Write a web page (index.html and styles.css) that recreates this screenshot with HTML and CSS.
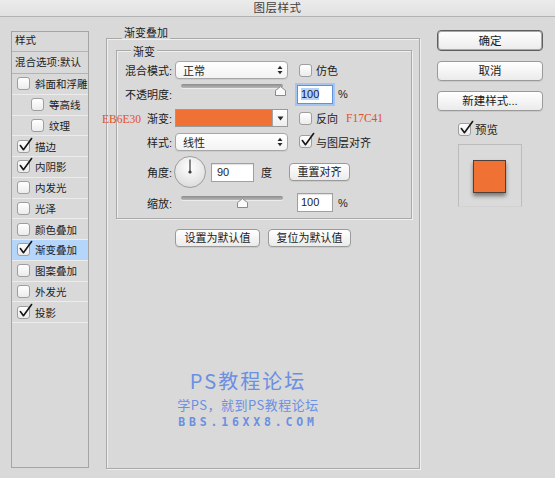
FILE: index.html
```html
<!DOCTYPE html>
<html lang="zh-CN">
<head>
<meta charset="utf-8">
<title>图层样式</title>
<link rel="stylesheet" href="styles.css">
</head>
<body>
<div class="titlebar">图层样式</div>
<div class="main">
  <nav class="sidebar">
    <div class="side-head">样式</div>
    <div class="side-blend">混合选项:默认</div>
    <div class="side-item"><span class="cb"></span>斜面和浮雕</div>
    <div class="side-item sub"><span class="cb"></span>等高线</div>
    <div class="side-item sub"><span class="cb"></span>纹理</div>
    <div class="side-item"><span class="cb"><svg class="tick" viewBox="0 0 16 16"><path d="M2.5 8 L5.8 12.5 L14.5 0.5"/></svg></span>描边</div>
    <div class="side-item"><span class="cb"><svg class="tick" viewBox="0 0 16 16"><path d="M2.5 8 L5.8 12.5 L14.5 0.5"/></svg></span>内阴影</div>
    <div class="side-item"><span class="cb"></span>内发光</div>
    <div class="side-item"><span class="cb"></span>光泽</div>
    <div class="side-item"><span class="cb"></span>颜色叠加</div>
    <div class="side-item active"><span class="cb"><svg class="tick" viewBox="0 0 16 16"><path d="M2.5 8 L5.8 12.5 L14.5 0.5"/></svg></span>渐变叠加</div>
    <div class="side-item"><span class="cb"></span>图案叠加</div>
    <div class="side-item"><span class="cb"></span>外发光</div>
    <div class="side-item"><span class="cb"><svg class="tick" viewBox="0 0 16 16"><path d="M2.5 8 L5.8 12.5 L14.5 0.5"/></svg></span>投影</div>
  </nav>

  <section class="group outer">
    <div class="group-title">渐变叠加</div>
    <div class="group inner">
      <div class="group-title">渐变</div>

      <div class="row r1">
        <div class="label">混合模式:</div>
        <div class="select"><span>正常</span><svg class="updown" viewBox="0 0 6 10"><path d="M0.5 4 L3 0.8 L5.5 4 Z M0.5 6 L3 9.2 L5.5 6 Z"/></svg></div>
        <span class="cb cb-gap"></span><span class="cb-text">仿色</span>
      </div>

      <div class="row r2">
        <div class="label">不透明度:</div>
        <div class="slider"><div class="track"></div><svg class="thumb" style="left:100px" viewBox="0 0 11 10"><path d="M0.5 9.5 L0.5 4.5 L5.5 0.6 L10.5 4.5 L10.5 9.5 Z"/></svg></div>
        <div class="field focus"><span class="sel">100</span></div>
        <span class="unit">%</span>
      </div>

      <div class="row r3">
        <div class="label"><span class="annot">EB6E30</span>渐变:</div>
        <div class="swatch"><div class="swatch-color"></div><div class="swatch-drop"><svg viewBox="0 0 7 5"><path d="M0.5 0.5 L6.5 0.5 L3.5 4.5 Z"/></svg></div></div>
        <span class="cb cb-gap"></span><span class="cb-text">反向</span>
        <span class="annot annot-r">F17C41</span>
      </div>

      <div class="row r4">
        <div class="label">样式:</div>
        <div class="select"><span>线性</span><svg class="updown" viewBox="0 0 6 10"><path d="M0.5 4 L3 0.8 L5.5 4 Z M0.5 6 L3 9.2 L5.5 6 Z"/></svg></div>
        <span class="cb cb-gap"><svg class="tick" viewBox="0 0 16 16"><path d="M2.5 8 L5.8 12.5 L14.5 0.5"/></svg></span><span class="cb-text">与图层对齐</span>
      </div>

      <div class="row r5">
        <div class="label">角度:</div>
        <svg class="dial" viewBox="0 0 32 32">
          <defs><radialGradient id="dg" cx="50%" cy="35%" r="65%"><stop offset="0" stop-color="#ffffff"/><stop offset="1" stop-color="#dcdcdc"/></radialGradient></defs>
          <circle cx="16" cy="16" r="15.5" fill="url(#dg)" stroke="#9c9c9c"/>
          <line x1="16" y1="16" x2="16" y2="3.5" stroke="#3a3a3a" stroke-width="1.2"/>
          <circle cx="16" cy="16" r="1.6" fill="#3a3a3a"/>
        </svg>
        <div class="field angle">90</div>
        <span class="deg">度</span>
        <button class="btn reset">重置对齐</button>
      </div>

      <div class="row r6">
        <div class="label">缩放:</div>
        <div class="slider low"><div class="track"></div><svg class="thumb" style="left:62px" viewBox="0 0 11 10"><path d="M0.5 9.5 L0.5 4.5 L5.5 0.6 L10.5 4.5 L10.5 9.5 Z"/></svg></div>
        <div class="field">100</div>
        <span class="unit">%</span>
      </div>
    </div>

    <div class="defaults">
      <button class="btn def1">设置为默认值</button>
      <button class="btn def2">复位为默认值</button>
    </div>

    <div class="watermark">
      <div class="wm1">PS教程论坛</div>
      <div class="wm2">学PS，就到PS教程论坛</div>
      <div class="wm3">BBS.16XX8.COM</div>
    </div>
  </section>

  <aside class="actions">
    <button class="btn big primary">确定</button>
    <button class="btn big">取消</button>
    <button class="btn big">新建样式...</button>
    <label class="preview-check"><span class="cb"><svg class="tick" viewBox="0 0 16 16"><path d="M2.5 8 L5.8 12.5 L14.5 0.5"/></svg></span>预览</label>
    <div class="preview"><div class="preview-square"></div></div>
  </aside>
</div>
</body>
</html>
```

FILE: styles.css
```css
* { box-sizing: border-box; }
html, body { margin: 0; padding: 0; }
body {
  width: 555px;
  height: 478px;
  overflow: hidden;
  background: #d9d9d9;
  font-family: "Liberation Sans", "Noto Sans CJK SC", sans-serif;
  font-size: 11px;
  color: #1c1c1c;
}

.titlebar {
  height: 17px;
  line-height: 16px;
  text-align: center;
  background: linear-gradient(#ebebeb, #e1e1e1);
  border-bottom: 1px solid #b3b3b3;
  font-size: 11.5px;
  letter-spacing: 0.5px;
  color: #404040;
}

.main {
  display: flex;
  align-items: flex-start;
  padding: 10px 0 0 11px;
}

/* ---------- sidebar ---------- */
.sidebar {
  margin-top: 4px;
  width: 78px;
  height: 437px;
  border: 1px solid #a4a4a4;
  display: flex;
  flex-direction: column;
}
.side-head {
  height: 20px;
  line-height: 17px;
  padding-left: 3px;
  border-bottom: 1px solid #b4b4b4;
  font-size: 10.5px;
}
.side-blend {
  height: 22px;
  line-height: 20px;
  padding-left: 3px;
  border-bottom: 1px solid #b4b4b4;
  font-size: 10.5px;
  white-space: nowrap;
}
.side-item {
  height: 20.75px;
  display: flex;
  align-items: center;
  gap: 5px;
  padding-left: 5px;
  border-bottom: 1px solid #ececec;
  font-size: 10.5px;
  white-space: nowrap;
}
.side-item.sub { padding-left: 19px; }
.side-item.active { background: #b5d5fb; }

/* ---------- checkbox ---------- */
.cb {
  position: relative;
  flex: none;
  display: inline-block;
  width: 13px;
  height: 13px;
  border: 1px solid #9e9e9e;
  border-radius: 3px;
  background: linear-gradient(#ffffff, #ececec);
}
.tick {
  position: absolute;
  left: 0;
  top: -3px;
  width: 15px;
  height: 15px;
  overflow: visible;
}
.tick path {
  fill: none;
  stroke: #161616;
  stroke-width: 1.7;
  stroke-linecap: round;
  stroke-linejoin: round;
}

/* ---------- groups ---------- */
.group {
  border: 1px solid #a9a9a9;
  box-shadow: 1px 1px 0 #efefef, inset 1px 1px 0 #efefef;
  display: flex;
  flex-direction: column;
}
.group-title {
  align-self: flex-start;
  line-height: 12px;
  padding: 0 2px;
  background: #d9d9d9;
  white-space: nowrap;
}
.outer {
  margin-top: 11px;
  margin-left: 17px;
  width: 314px;
  height: 431px;
}
.outer > .group-title {
  margin: -12px 0 0 15px;
}
.inner {
  margin: 11px 7px 0 9px;
  height: 169px;
  padding-top: 5px;
}
.inner > .group-title {
  margin: -10px 0 0 14px;
}

/* ---------- rows ---------- */
.row {
  display: flex;
  align-items: center;
  height: 24px;
  white-space: nowrap;
}
.row.r4 { height: 23px; }
.row.r5 { height: 38px; }
.row.r6 { height: 23px; }
.label {
  flex: none;
  width: 55px;
  display: flex;
  justify-content: flex-end;
  align-items: baseline;
  margin-right: 3px;
}
.annot {
  font-family: "Liberation Serif", serif;
  font-size: 11.5px;
  color: #e0502a;
  margin-right: 6px;
}
.annot-r { margin-left: 8px; margin-right: 0; }

.select {
  flex: none;
  width: 113px;
  height: 18px;
  border: 1px solid #a6a6a6;
  border-radius: 4px;
  background: linear-gradient(#ffffff, #f3f3f3);
  display: flex;
  align-items: center;
  justify-content: space-between;
  padding: 0 4px 0 7px;
  box-shadow: 0 1px 0 rgba(0,0,0,0.06);
}
.updown { width: 6px; height: 10px; }
.updown path { fill: #2a2a2a; }

.cb-gap { margin-left: 11px; }
.cb-text { margin-left: 4px; }

.slider {
  position: relative;
  flex: none;
  width: 113px;
  height: 16px;
  margin-top: -4px;
}
.slider.low { margin-top: 2px; }
.track {
  margin: 0 5px 0 6px;
  height: 4px;
  border-radius: 2px;
  background: linear-gradient(#8c8c8c, #b8b8b8);
  box-shadow: 0 1px 0 #ececec;
}
.thumb {
  position: absolute;
  top: 2px;
  width: 11px;
  height: 10px;
}
.thumb path { fill: #fafafa; stroke: #8a8a8a; stroke-width: 1; }

.field {
  flex: none;
  width: 36px;
  height: 19px;
  margin-left: 9px;
  border: 1px solid #a0a0a0;
  background: #ffffff;
  line-height: 17px;
  padding-left: 3px;
  box-shadow: inset 0 1px 1px rgba(0,0,0,0.12);
}
.field.focus {
  border-color: #5f93d6;
  box-shadow: 0 0 0 2px #a5c5ef;
}
.sel { background: #b3d3fc; }
.unit { margin-left: 5px; }

.swatch {
  flex: none;
  width: 113px;
  height: 18px;
  display: flex;
  border: 1px solid #9a9a9a;
}
.swatch-color {
  flex: 1;
  background: #ef7234;
}
.swatch-drop {
  width: 15px;
  background: linear-gradient(#ffffff, #eeeeee);
  border-left: 1px solid #a6a6a6;
  display: flex;
  align-items: center;
  justify-content: center;
}
.swatch-drop svg { width: 7px; height: 5px; }
.swatch-drop path { fill: #2a2a2a; }

.dial {
  flex: none;
  width: 32px;
  height: 32px;
  margin-left: -1px;
}
.field.angle {
  width: 43px;
  margin-left: 5px;
  padding-left: 5px;
}
.deg { margin-left: 7px; }

/* ---------- buttons ---------- */
.btn {
  font: inherit;
  color: #1a1a1a;
  height: 18px;
  padding: 0;
  border: 1px solid #9a9a9a;
  border-radius: 4px;
  background: linear-gradient(#ffffff, #ebebeb);
  box-shadow: 0 1px 0 rgba(0,0,0,0.07);
  line-height: 16px;
  text-align: center;
  white-space: nowrap;
}
.reset { width: 61px; margin-left: 17px; }

.defaults {
  display: flex;
  gap: 8px;
  margin: 10px 0 0 68px;
}
.def1 { width: 85px; }
.def2 { width: 83px; }

.watermark {
  margin-top: 122px;
  padding-right: 30px;
  text-align: center;
  color: #6b8fe2;
  white-space: nowrap;
}
.wm1 {
  font-family: "Noto Sans CJK SC", sans-serif;
  font-size: 20px;
  line-height: 24px;
  letter-spacing: 2px;
  margin-bottom: 3px;
}
.wm2 {
  font-family: "Noto Sans CJK SC", sans-serif;
  font-size: 13px;
  line-height: 18px;
  letter-spacing: 0.5px;
}
.wm3 {
  font-family: "DejaVu Sans Mono", monospace;
  font-weight: bold;
  font-size: 11.5px;
  line-height: 16px;
  letter-spacing: 3.8px;
}

/* ---------- right column ---------- */
.actions {
  margin-left: 17px;
  margin-top: 3px;
  width: 106px;
  display: flex;
  flex-direction: column;
}
.btn.big { width: 106px; height: 20px; line-height: 18px; margin-bottom: 10px; font-size: 11.5px; }
.btn.primary {
  height: 21px;
  border-color: #5e5e5e;
  box-shadow: inset 0 0 0 1px #a8a8a8;
}
.preview-check {
  display: flex;
  align-items: center;
  gap: 4px;
  margin: 1px 0 0 21px;
  height: 14px;
  font-size: 11.5px;
}
.preview {
  margin: 8px 0 0 21px;
  width: 64px;
  height: 63px;
  border: 1px solid #bcbcbc;
  border-bottom-color: #d2d2d2;
  background: #dadada;
  padding: 15px 0 0 14px;
}
.preview-square {
  width: 33px;
  height: 33px;
  background: #ef7234;
  border: 1px solid #4e4038;
  box-shadow: 0 3px 4px rgba(0,0,0,0.45);
}
```
